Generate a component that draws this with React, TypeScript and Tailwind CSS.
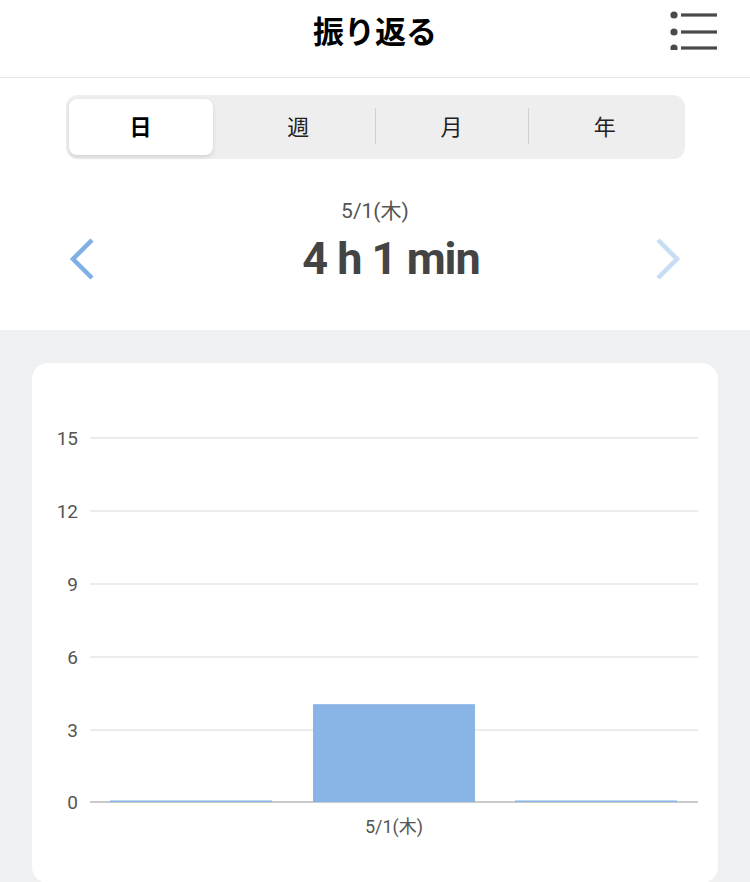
const FONT = "font-['Roboto','Noto_Sans_CJK_JP',sans-serif]";

const MenuIcon = () => (
  <svg width="50" height="40" viewBox="0 0 50 40">
    {[5, 22, 38].map((y) => (
      <g key={y}>
        <circle cx="5" cy={y} r="3.6" fill="#4a4a4a" />
        <rect x="12" y={y - 1.6} width="36" height="3.2" fill="#4a4a4a" />
      </g>
    ))}
  </svg>
);

const Chevron = ({ dir, color }: { dir: "left" | "right"; color: string }) => (
  <svg width="28" height="42" viewBox="0 0 28 42">
    <path
      d={dir === "left" ? "M24 2 L5 21 L24 40" : "M4 2 L23 21 L4 40"}
      fill="none"
      stroke={color}
      strokeWidth="4.5"
    />
  </svg>
);

const tabs = ["日", "週", "月", "年"];

const Segmented = () => (
  <div className="mx-auto flex h-16 w-[619px] items-center rounded-xl bg-[#eeeeee] p-[3px]">
    {tabs.map((t, i) => (
      <div key={t} className="relative flex h-full flex-1 items-center justify-center">
        {i === 0 ? (
          <div className="mr-auto flex h-[56px] w-[144px] items-center justify-center rounded-lg bg-white text-[22px] font-bold text-black shadow-[0_2px_4px_rgba(0,0,0,0.12)]">
            {t}
          </div>
        ) : (
          <span className="text-[22px] text-[#222]">{t}</span>
        )}
        {i > 1 && <div className="absolute left-0 top-[10px] h-[36px] w-px bg-[#d0d0d0]" />}
      </div>
    ))}
  </div>
);

const Chart = () => {
  const grid = [
    { v: 15, y: 75 },
    { v: 12, y: 148 },
    { v: 9, y: 221 },
    { v: 6, y: 294 },
    { v: 3, y: 367 },
  ];
  const base = 439;
  const scale = 73 / 3;
  const value = 4.02;
  return (
    <svg width="686" height="520" viewBox="0 0 686 520" className="block">
      {grid.map((g) => (
        <g key={g.v}>
          <line x1="58" x2="666" y1={g.y} y2={g.y} stroke="#d9d9d9" strokeWidth="1" />
          <text x="46" y={g.y + 7} textAnchor="end" fontSize="19" fill="#555">
            {g.v}
          </text>
        </g>
      ))}
      <line x1="58" x2="666" y1={base} y2={base} stroke="#b8b8b8" strokeWidth="1.5" />
      <text x="46" y={base + 7} textAnchor="end" fontSize="19" fill="#555">
        0
      </text>
      <rect x="78" y={base - 1.5} width="162" height="1.5" fill="#88b4e6" />
      <rect x="281" y={base - value * scale} width="162" height={value * scale} fill="#88b4e6" />
      <rect x="483" y={base - 1.5} width="162" height="1.5" fill="#88b4e6" />
      <text x="362" y="470" textAnchor="middle" fontSize="18" fill="#555">
        5/1(木)
      </text>
    </svg>
  );
};

export default function App() {
  return (
    <div className={`${FONT} h-[882px] w-[750px] overflow-hidden bg-[#eff0f2]`}>
      <header className="relative flex h-[78px] items-center justify-center border-b border-[#e6e6e6] bg-white">
        <h1 className="-mt-[11px] text-[31px] font-bold text-black">振り返る</h1>
        <div className="absolute right-[31px] top-[10px]">
          <MenuIcon />
        </div>
      </header>

      <section className="h-[252px] bg-white pt-[17px]">
        <Segmented />
        <div className="mt-[38px] flex items-start justify-between px-[68px]">
          <div className="mt-[41px]">
            <Chevron dir="left" color="#7eb0e6" />
          </div>
          <div className="flex flex-col items-center">
            <div className="text-[21px] leading-[28px] text-[#555]">5/1(木)</div>
            <div className="mt-[8px] pl-[32px] text-[45px] font-bold leading-[52px] tracking-[-1px] text-[#444]">
              4 h 1 min
            </div>
          </div>
          <div className="mt-[41px]">
            <Chevron dir="right" color="#c6ddf4" />
          </div>
        </div>
      </section>

      <div className="px-8 pt-[33px]">
        <div className="w-[686px] rounded-2xl bg-white">
          <Chart />
        </div>
      </div>
    </div>
  );
}
